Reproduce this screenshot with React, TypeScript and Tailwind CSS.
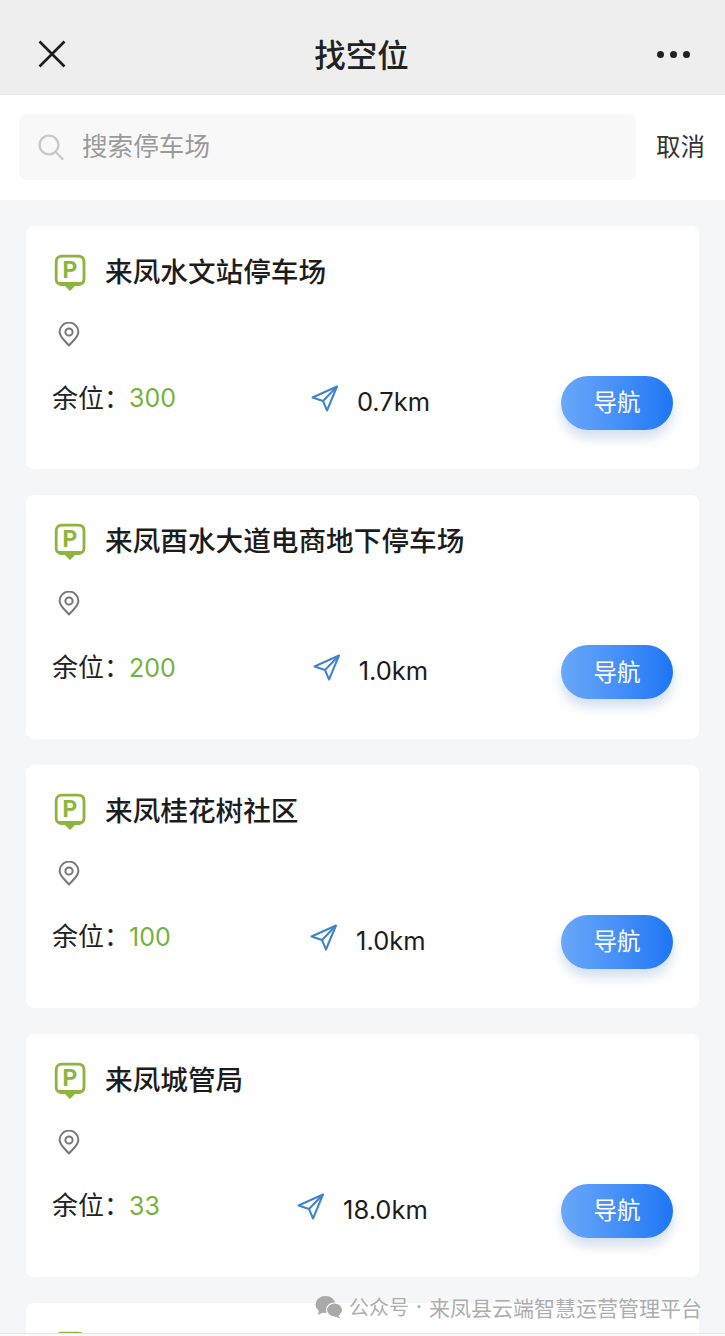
import React from "react";

const FONT = '"Noto Sans CJK SC", "Noto Sans", sans-serif';
const LATIN = 'Inter, "Noto Sans CJK SC", sans-serif';

function ParkIcon({ letter = true }: { letter?: boolean }) {
  return (
    <svg width="32" height="38" viewBox="0 0 32 38" className="shrink-0">
      <path d="M8 2.2H24Q30 2.2 30 8V25Q30 30 25 30H7Q2.2 30 2.2 25V8Q2.2 2.2 8 2.2Z" fill="#fff" stroke="#8bb53c" strokeWidth="2.8" />
      <path d="M2.5 28Q3.5 32 8 32H11L16 37L21 32H24Q28.5 32 29.5 28Z" fill="#8bb53c" />
      {letter && (
        <text x="16" y="23.5" textAnchor="middle" fontSize="23" fontWeight="700" fill="#8bb53c" fontFamily="Roboto, sans-serif">P</text>
      )}
    </svg>
  );
}

function PinIcon() {
  return (
    <svg width="22" height="25" viewBox="0 0 22 25" fill="none" stroke="#777" strokeWidth="2">
      <path d="M11 23.5C7 18.8 1.6 15 1.6 10A9.4 9.4 0 0 1 20.4 10C20.4 15 15 18.8 11 23.5Z" strokeLinejoin="round" />
      <circle cx="11" cy="10" r="3.6" />
    </svg>
  );
}

function SendIcon() {
  return (
    <svg width="27" height="27" viewBox="0 0 27 27" fill="none" stroke="#3f83c8" strokeWidth="2" strokeLinejoin="round">
      <path d="M1.5 12.5L26 1.5L16 25.5L12 16Z" />
      <path d="M26 1.5L12 16" />
    </svg>
  );
}

const lots = [
  { name: "来凤水文站停车场", count: "300", dist: "0.7km" },
  { name: "来凤酉水大道电商地下停车场", count: "200", dist: "1.0km" },
  { name: "来凤桂花树社区", count: "100", dist: "1.0km" },
  { name: "来凤城管局", count: "33", dist: "18.0km" },
];

function Card({ name, count, dist }: { name: string; count: string; dist: string }) {
  return (
    <div className="shrink-0 h-[243.33px] rounded-lg bg-white pt-[28px] pl-[28px] pr-[26px]">
      <div className="flex h-[38px] items-start">
        <ParkIcon />
        <div className="ml-[19px] -mt-[2px] text-[27.65px] leading-[36px] font-medium text-[#1c1c1c] whitespace-nowrap">{name}</div>
      </div>
      <div className="mt-[30px] ml-[4px] h-[25px]">
        <PinIcon />
      </div>
      <div className="mt-[29px] -ml-[2px] flex justify-between items-start">
        <div className="flex items-center h-[46px] whitespace-nowrap">
          <span className="text-[26px] text-[#222] w-[77px] -mt-[6px]">余位：</span>
          <span className="text-[25px] text-[#75b13c]" style={{ fontFamily: LATIN }}>{count}</span>
        </div>
        <div className="flex items-center h-[52px] pl-[4px]">
          <div className="-mt-[7px]"><SendIcon /></div>
          <span className="ml-[19px] text-[25.5px] text-[#1c1c1c]" style={{ fontFamily: LATIN }}>{dist}</span>
        </div>
        <button className="h-[54px] w-[112px] rounded-full bg-gradient-to-r from-[#69a8fa] to-[#1c76f5] pb-[2px] text-[23.5px] text-white shadow-[0_8px_12px_rgba(60,110,180,0.22)]">
          导航
        </button>
      </div>
    </div>
  );
}

export default function App() {
  return (
    <div className="relative flex h-[1336px] w-[725px] flex-col overflow-hidden bg-[#f4f6f8]" style={{ fontFamily: FONT }}>
      <header className="flex h-[95px] shrink-0 items-center justify-between bg-[#eeeeee] pl-[38px] pr-[35px] pt-[14px] border-b border-[#e6e6e6]">
        <svg width="28" height="28" viewBox="0 0 28 28" stroke="#1d1d1d" strokeWidth="2.6" fill="none">
          <path d="M1.5 1.5L26.5 26.5M26.5 1.5L1.5 26.5" />
        </svg>
        <div className="text-[31.5px] font-medium text-[#222]">找空位</div>
        <div className="flex gap-[6px]">
          <span className="h-[7px] w-[7px] rounded-full bg-[#222]" />
          <span className="h-[7px] w-[7px] rounded-full bg-[#222]" />
          <span className="h-[7px] w-[7px] rounded-full bg-[#222]" />
        </div>
      </header>

      <div className="flex h-[105px] shrink-0 items-start bg-white pl-[19px] pt-[19px]">
        <div className="flex h-[66px] w-[617px] items-center rounded-lg bg-[#f8f8f8] pl-[19px]">
          <svg width="26" height="26" viewBox="0 0 26 26" fill="none" stroke="#c9c9c9" strokeWidth="2.4">
            <circle cx="11" cy="11" r="9.4" />
            <path d="M17.8 18L24.5 25" strokeLinecap="round" />
          </svg>
          <span className="ml-[18px] -mt-[4px] text-[25.6px] text-[#9a9a9a]">搜索停车场</span>
        </div>
        <span className="ml-[20px] mt-[14px] text-[24.5px] leading-[36px] text-[#333]">取消</span>
      </div>

      <div className="flex min-h-0 flex-1 flex-col gap-[26px] overflow-hidden px-[26px] pt-[26px]">
        {lots.map((l, i) => (
          <Card key={i} name={l.name} count={l.count} dist={l.dist} />
        ))}
        <div className="h-[60px] shrink-0 rounded-lg bg-white pt-[28px] pl-[28px]">
          <ParkIcon letter={false} />
        </div>
      </div>
      <div className="h-[3px] shrink-0 border-t border-[#e8e8e8] bg-[#fafafa]" />

      <div className="absolute right-[23px] top-[1293px] flex items-center whitespace-nowrap text-[21px] leading-[28px] text-[#adadad]">
        <svg width="28" height="24" viewBox="0 0 28 24" className="mr-[6px]" fill="#a9a9a9">
          <ellipse cx="10.5" cy="9.5" rx="10" ry="8.5" />
          <path d="M4 15L3 20L9 17Z" />
          <ellipse cx="19.5" cy="15" rx="8" ry="7" stroke="#fff" strokeWidth="1.2" />
          <path d="M23 20L25 23.5L19 21Z" />
        </svg>
        <span className="text-[20px]">公众号</span>
        <span className="mx-[7px]" style={{ fontFamily: LATIN }}>·</span>
        <span>来凤县云端智慧运营管理平台</span>
      </div>
    </div>
  );
}
